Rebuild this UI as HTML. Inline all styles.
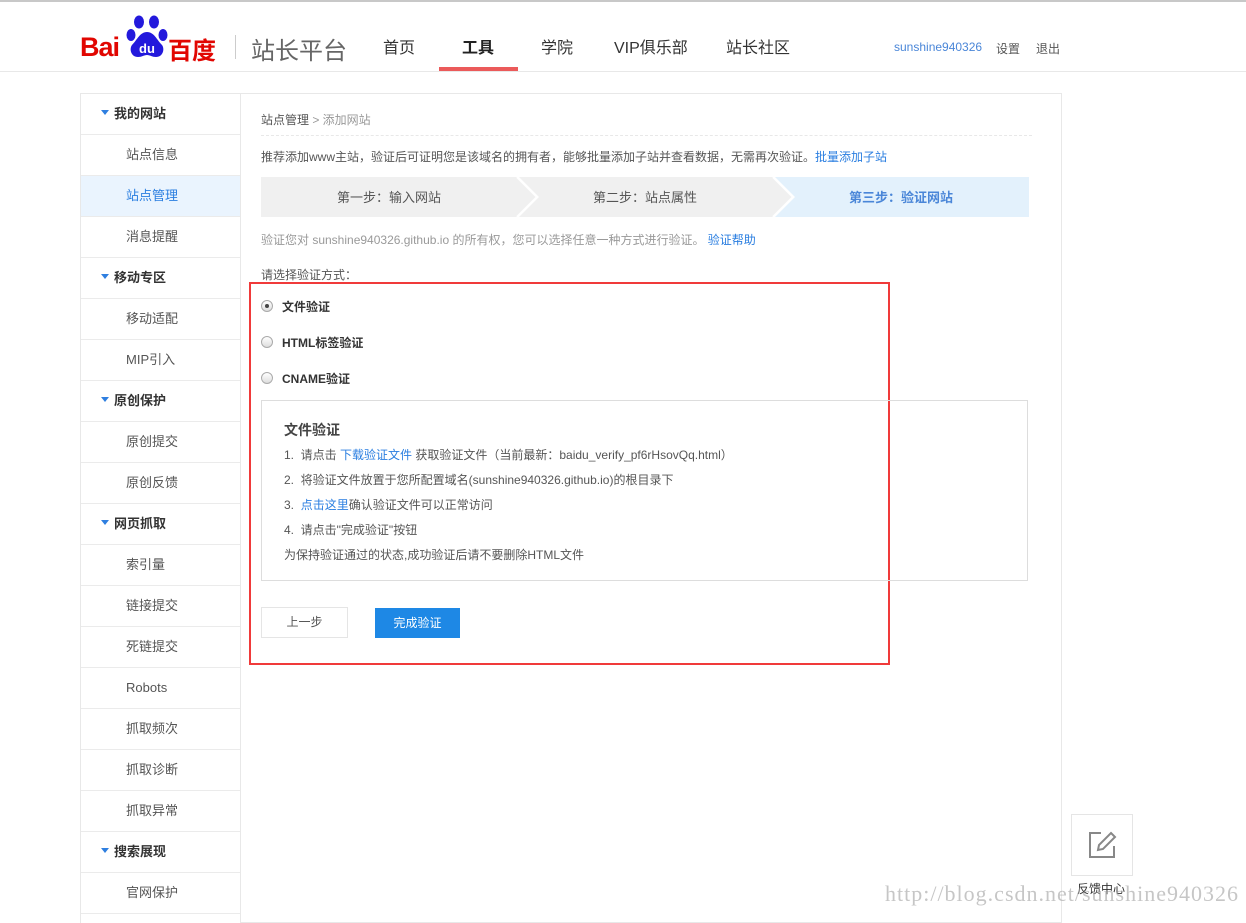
<!DOCTYPE html>
<html><head><meta charset="utf-8"><style>
*{margin:0;padding:0;box-sizing:border-box}
body{width:1246px;height:916px;overflow:hidden;background:#fff;font-family:"Liberation Sans","Noto Sans CJK SC",sans-serif;color:#333;position:relative;font-size:12px}
.abs{position:absolute}
.topline{left:0;top:0;width:1246px;height:2px;background:#c8c8c8}
.hdr{left:0;top:71px;width:1246px;height:1px;background:#e8e8e8}
.nav{top:34px;font-size:16px;color:#333}
.side{left:80px;top:93px;width:161px;border:1px solid #e8e8e8;border-bottom:none;height:830px}
.side div{height:41px;border-bottom:1px solid #ebebeb;line-height:40px;font-size:13px;color:#555;padding-left:45px}
.side div.h{padding-left:20px;font-weight:bold;color:#333}
.side div.h:before{content:"";display:inline-block;border:4px solid transparent;border-top:5px solid #2f7fe0;border-bottom:0;margin-right:5px;vertical-align:3px}
.side div.on{background:#eaf4fe;color:#2a7ee0}
.main{left:240px;top:93px;width:822px;height:830px;border:1px solid #e8e8e8}
.blue{color:#2a7ee0}
.radio{width:12px;height:12px;border:1px solid #aaa;border-radius:50%;background:linear-gradient(#fff,#ddd)}
.radio.c:after{content:"";display:block;width:4px;height:4px;background:#444;border-radius:50%;margin:3px}
.rl{font-size:12px;font-weight:bold;color:#333}
.box{left:261px;top:400px;width:767px;height:181px;border:1px solid #ddd}
.box p{position:absolute;left:22px;font-size:12px;color:#555}
</style></head><body>
<div class="abs topline"></div>
<div class="abs" style="left:80px;top:32px;font-size:27px;font-weight:bold;color:#e10601;letter-spacing:-1px;font-family:'Liberation Sans',sans-serif">Bai</div>
<svg class="abs" style="left:125px;top:14px" width="44" height="46" viewBox="0 0 42 46">
<g fill="#2319dc"><ellipse cx="13" cy="8" rx="5" ry="6.5"/><ellipse cx="28" cy="8" rx="5" ry="6.5"/><ellipse cx="5" cy="21" rx="4.5" ry="6"/><ellipse cx="37" cy="21" rx="4.5" ry="6"/><path d="M21 18c-7 0-10 8-15 13-3 4-1 12 6 12 4 0 6-2 9-2s5 2 9 2c7 0 9-8 6-12-5-5-8-13-15-13z"/></g>
<text x="21" y="39" font-size="13" font-weight="bold" fill="#fff" text-anchor="middle" font-family="Liberation Sans">du</text></svg>
<div class="abs" style="left:168px;top:31px;font-size:24px;font-weight:bold;color:#e10601">百度</div>
<div class="abs" style="left:235px;top:35px;width:1px;height:24px;background:#ccc"></div>
<div class="abs" style="left:251px;top:31px;font-size:24px;color:#666">站长平台</div>
<div class="abs nav" style="left:383px">首页</div>
<div class="abs nav" style="left:462px;font-weight:bold;color:#222">工具</div>
<div class="abs" style="left:439px;top:67px;width:79px;height:4px;background:#eb5a5a"></div>
<div class="abs nav" style="left:541px">学院</div>
<div class="abs nav" style="left:614px">VIP俱乐部</div>
<div class="abs nav" style="left:726px">站长社区</div>
<div class="abs" style="left:894px;top:40px;font-size:12px;color:#4a86d8">sunshine940326</div>
<div class="abs" style="left:996px;top:40px;font-size:12px;color:#555">设置</div>
<div class="abs" style="left:1036px;top:40px;font-size:12px;color:#555">退出</div>
<div class="abs hdr"></div>

<div class="abs side">
<div class="h">我的网站</div><div>站点信息</div><div class="on">站点管理</div><div>消息提醒</div>
<div class="h">移动专区</div><div>移动适配</div><div>MIP引入</div>
<div class="h">原创保护</div><div>原创提交</div><div>原创反馈</div>
<div class="h">网页抓取</div><div>索引量</div><div>链接提交</div><div>死链提交</div><div>Robots</div><div>抓取频次</div><div>抓取诊断</div><div>抓取异常</div>
<div class="h">搜索展现</div><div>官网保护</div>
</div>
<div class="abs main"></div>

<div class="abs" style="left:261px;top:111px;color:#555">站点管理 <span style="color:#999">&gt; 添加网站</span></div>
<div class="abs" style="left:261px;top:135px;width:771px;border-top:1px dashed #e8e8e8"></div>
<div class="abs" style="left:261px;top:148px;color:#555">推荐添加www主站，验证后可证明您是该域名的拥有者，能够批量添加子站并查看数据，无需再次验证。<span class="blue">批量添加子站</span></div>
<svg class="abs" style="left:261px;top:177px" width="768" height="40">
<path d="M0 0H256L276 20L256 40H0Z" fill="#f0f0f0"/>
<path d="M258 0H512L532 20L512 40H258L278 20Z" fill="#f0f0f0"/>
<path d="M514 0H768V40H514L534 20Z" fill="#e3f1fc"/>
<path d="M256 0L276 20L256 40M512 0L532 20L512 40" stroke="#fff" stroke-width="2" fill="none"/>
<text x="128" y="25" font-size="13" fill="#555" text-anchor="middle" font-family="Liberation Sans,Noto Sans CJK SC">第一步：输入网站</text>
<text x="384" y="25" font-size="13" fill="#555" text-anchor="middle" font-family="Liberation Sans,Noto Sans CJK SC">第二步：站点属性</text>
<text x="640" y="25" font-size="13" fill="#4a86d8" font-weight="bold" text-anchor="middle" font-family="Liberation Sans,Noto Sans CJK SC">第三步：验证网站</text>
</svg>
<div class="abs" style="left:261px;top:231px;color:#999">验证您对 sunshine940326.github.io 的所有权，您可以选择任意一种方式进行验证。 <span class="blue">验证帮助</span></div>
<div class="abs" style="left:261px;top:266px;color:#555">请选择验证方式：</div>
<div class="abs" style="left:249px;top:282px;width:641px;height:383px;border:2px solid #f03a3a"></div>
<div class="abs radio c" style="left:261px;top:300px"></div><div class="abs rl" style="left:282px;top:298px">文件验证</div>
<div class="abs radio" style="left:261px;top:336px"></div><div class="abs rl" style="left:282px;top:334px">HTML标签验证</div>
<div class="abs radio" style="left:261px;top:372px"></div><div class="abs rl" style="left:282px;top:370px">CNAME验证</div>
<div class="abs box">
<p style="top:19px;font-size:14px;font-weight:bold;color:#444">文件验证</p>
<p style="top:45px">1.&nbsp; 请点击 <span class="blue">下载验证文件</span> 获取验证文件（当前最新：baidu_verify_pf6rHsovQq.html）</p>
<p style="top:70px">2.&nbsp; 将验证文件放置于您所配置域名(sunshine940326.github.io)的根目录下</p>
<p style="top:95px">3.&nbsp; <span class="blue">点击这里</span>确认验证文件可以正常访问</p>
<p style="top:120px">4.&nbsp; 请点击"完成验证"按钮</p>
<p style="top:145px">为保持验证通过的状态,成功验证后请不要删除HTML文件</p>
</div>
<div class="abs" style="left:261px;top:607px;width:87px;height:31px;border:1px solid #e5e5e5;text-align:center;line-height:29px;color:#555">上一步</div>
<div class="abs" style="left:375px;top:608px;width:85px;height:30px;background:#1e88e5;color:#fff;text-align:center;line-height:30px">完成验证</div>

<div class="abs" style="left:1071px;top:814px;width:62px;height:62px;border:1px solid #e5e5e5"></div>
<svg class="abs" style="left:1087px;top:830px" width="30" height="30" viewBox="0 0 30 30" fill="none" stroke="#888" stroke-width="2">
<path d="M14 3H3V27H27V16"/><path d="M24 3l4 4-12 12-5 1 1-5z"/></svg>
<div class="abs" style="left:1077px;top:880px;color:#333">反馈中心</div>
<div class="abs" style="left:885px;top:881px;font-family:'Liberation Serif',serif;font-size:22px;letter-spacing:1px;color:rgba(160,160,160,.6);white-space:nowrap">http://blog.csdn.net/sunshine940326</div>
</body></html>
